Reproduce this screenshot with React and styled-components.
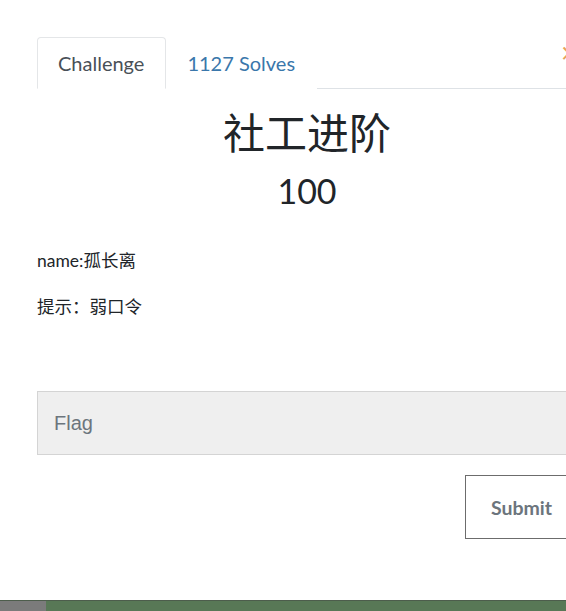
import React from 'react';
import styled, { createGlobalStyle } from 'styled-components';

const GlobalStyle = createGlobalStyle`
  html, body {
    margin: 0;
    padding: 0;
    background: #fff;
    overflow: hidden;
  }
  body {
    font-family: Lato, "Noto Sans CJK SC", sans-serif;
    color: #212529;
  }
`;

const Page = styled.div`
  height: 611px;
  display: flex;
  flex-direction: column;
  width: 566px;
  overflow: hidden;
`;

const Modal = styled.div`
  flex: 1;
  position: relative;
  padding: 37px 0 0 37px;
`;

const Body = styled.div`
  width: 540px;
`;

const Close = styled.span`
  position: absolute;
  top: 38px;
  left: 561px;
  font-size: 28px;
  line-height: 1;
  color: #e8a25a;
`;

const Tabs = styled.ul`
  display: flex;
  margin: 0;
  padding: 0;
  list-style: none;
  border-bottom: 1px solid #dee2e6;
`;

const Tab = styled.li`
  margin-bottom: -1px;
  padding: 13px 21px 12px 20px;
  font-size: 20px;
  line-height: 25px;
  border: 1px solid ${p => (p.active ? '#e4e6e8' : 'transparent')};
  border-bottom-color: ${p => (p.active ? '#fff' : 'transparent')};
  border-radius: 4px 4px 0 0;
  background: #fff;
  color: ${p => (p.active ? '#495057' : '#3a77ab')};
`;

const Title = styled.h2`
  margin: 18px 0 0;
  text-align: center;
  font-weight: 400;
  font-size: 42px;
  line-height: 52px;
  color: #212529;
`;

const Points = styled.h3`
  margin: 10px 0 0;
  text-align: center;
  font-weight: 400;
  font-size: 34px;
  line-height: 44px;
  color: #212529;
`;

const Description = styled.div`
  margin-top: 36px;
  font-size: 17.5px;
  line-height: 24px;

  p {
    margin: 0 0 22px;
  }
`;

const Form = styled.form`
  margin-top: 72px;
  display: flex;
  flex-direction: column;
  align-items: flex-end;
  gap: 20px;
`;

const FlagInput = styled.input`
  box-sizing: border-box;
  width: 100%;
  height: 64px;
  padding: 0 16px;
  border: 1px solid #d4d4d4;
  border-radius: 0;
  background: #efefef;
  font-family: "Liberation Sans", Arial, sans-serif;
  font-size: 20px;
  color: #495057;
  outline: none;

  &::placeholder {
    color: #6c757d;
  }
`;

const SubmitButton = styled.button`
  box-sizing: border-box;
  height: 64px;
  padding: 0 24px 0 25px;
  border: 1px solid #6c6c6c;
  border-radius: 0;
  background: #fff;
  font-family: Lato, sans-serif;
  font-weight: 700;
  font-size: 19.5px;
  color: #6c757d;
`;

const Footer = styled.div`
  height: 10px;
  display: flex;
  border-top: 1px solid #4d5d4c;
`;

const FooterPart = styled.div`
  width: ${p => p.w || 'auto'};
  flex: ${p => (p.w ? 'none' : 1)};
  background: ${p => p.bg};
`;

export default function App() {
  return (
    <Page>
      <GlobalStyle />
      <Modal>
        <Close>×</Close>
        <Body>
          <Tabs>
            <Tab active>Challenge</Tab>
            <Tab>1127 Solves</Tab>
          </Tabs>
          <Title>社工进阶</Title>
          <Points>100</Points>
          <Description>
            <p>name:孤长离</p>
            <p>提示：弱口令</p>
          </Description>
          <Form onSubmit={e => e.preventDefault()}>
            <FlagInput placeholder="Flag" />
            <SubmitButton type="submit">Submit</SubmitButton>
          </Form>
        </Body>
      </Modal>
      <Footer>
        <FooterPart w="46px" bg="#7b7b7b" />
        <FooterPart bg="#587856" />
      </Footer>
    </Page>
  );
}
